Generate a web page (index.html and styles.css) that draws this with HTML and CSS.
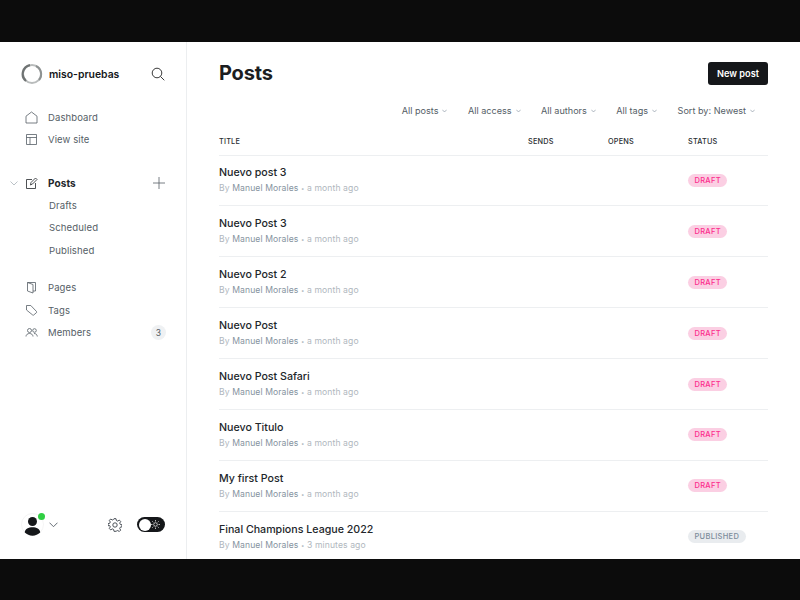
FILE: index.html
```html
<!DOCTYPE html>
<html lang="en">
<head>
<meta charset="utf-8">
<title>Posts</title>
<link rel="stylesheet" href="styles.css">
</head>
<body>
<div class="bar"></div>
<div class="app">
  <aside class="side">
    <div class="brand">
      <svg class="logo" width="22" height="22" viewBox="0 0 22 22" fill="none"><circle cx="11" cy="11" r="9" stroke="#b9bcbc" stroke-width="2"/><path d="M5 18A9 9 0 0 1 9 2.200" stroke="#6f7373" stroke-width="2.200"/><path d="M15 3A9 9 0 0 1 18 17" stroke="#8e9292" stroke-width="2"/></svg>
      <span class="site">miso-pruebas</span>
      <svg class="search" width="14" height="14" viewBox="0 0 14 14" fill="none" stroke="#222" stroke-width=".9"><circle cx="6" cy="6" r="4.800"/><path d="M9.500 9.500 13.300 13.300"/></svg>
    </div>
    <nav class="group top">
      <a class="item"><svg class="ico" width="13" height="13" viewBox="0 0 13 13"><path d="M1 5.200 6.500 1 12 5.200V12H1Z"/></svg>Dashboard</a>
      <a class="item"><svg class="ico" width="13" height="13" viewBox="0 0 13 13"><path d="M1.500 1.500h10v10h-10ZM1.500 4.500h10M5 4.500v7"/></svg>View site</a>
    </nav>
    <nav class="group posts">
      <a class="item strong">
        <svg class="caret" width="8" height="5" viewBox="0 0 8 5"><path d="M.5.5 4 4 7.500.5"/></svg>
        <svg class="ico" width="13" height="13" viewBox="0 0 13 13"><path d="M7 2.500H1.500V11.500H10.500V6M5.500 8 6 5.500 10.500 1 12 2.500 7.500 7Z"/></svg>Posts
        <svg class="plus" width="12" height="12" viewBox="0 0 12 12"><path d="M6 0v12M0 6h12"/></svg>
      </a>
      <a class="sub">Drafts</a>
      <a class="sub">Scheduled</a>
      <a class="sub">Published</a>
    </nav>
    <nav class="group lower">
      <a class="item"><svg class="ico" width="13" height="13" viewBox="0 0 13 13"><path d="M2.500 1.500h8V10H8M2.500 1.500V10L8 12V3.500L2.500 1.500"/></svg>Pages</a>
      <a class="item"><svg class="ico" width="13" height="13" viewBox="0 0 13 13"><path d="M1.500 1.500h4.300L11.500 7.500c.3.400.3.800 0 1.100L8.700 11c-.3.300-.7.300-1 0L1.500 6Z"/></svg>Tags</a>
      <a class="item"><svg class="ico" width="13" height="13" viewBox="0 0 13 13"><circle cx="4.500" cy="4.500" r="2"/><circle cx="9.500" cy="4.500" r="1.800"/><path d="M1 10.500c0-4 7-4 7 0M9 7.500c2 0 3 1 3.300 3"/></svg>Members<span class="count">3</span></a>
    </nav>
    <div class="foot">
      <div class="avatar">
        <svg width="23" height="23" viewBox="0 0 23 23"><circle cx="11.500" cy="11.500" r="11" fill="#fff" stroke="#ececec" stroke-width=".6"/><circle cx="11.500" cy="8.500" r="4.500" fill="#15171a"/><path d="M3.800 19.500c0-7 15.400-7 15.400 0a11 11 0 0 1-15.400 0Z" fill="#15171a"/></svg>
        <span class="dot"></span>
      </div>
      <svg class="chev" width="9" height="6" viewBox="0 0 9 6"><path d="M.5.700 4.500 4.700 8.500.700"/></svg>
      <svg class="gear" width="14" height="14" viewBox="0 0 14 14"><circle cx="7" cy="7" r="2.200"/><path d="M6 .7h2l.4 1.800 1.300.6 1.600-1 1.400 1.400-1 1.600.6 1.300 1.700.4v2l-1.700.4-.6 1.300 1 1.600-1.400 1.400-1.600-1-1.300.6L8 13.300H6l-.4-1.800-1.300-.6-1.600 1-1.400-1.400 1-1.600-.6-1.300L0 7.700v-2l1.700-.4.600-1.300-1-1.600 1.400-1.400 1.600 1 1.300-.6Z"/></svg>
      <div class="toggle">
        <span class="knob"></span>
        <svg width="9" height="9" viewBox="0 0 9 9"><circle cx="4.500" cy="4.500" r="1.800"/><path d="M4.500 0v1.500M4.500 7.500V9M0 4.500h1.500M7.500 4.500H9M1.300 1.300l1 1M6.700 6.700l1 1M1.300 7.700l1-1M6.700 2.300l1-1"/></svg>
      </div>
    </div>
  </aside>
  <main class="main">
    <header class="head">
      <h1>Posts</h1>
      <button class="new">New post</button>
    </header>
    <div class="filters">
      <span class="filter">All posts<svg width="5" height="4" viewBox="0 0 5 4"><path d="M.3.700 2.500 3 4.700.700"/></svg></span>
      <span class="filter">All access<svg width="5" height="4" viewBox="0 0 5 4"><path d="M.3.700 2.500 3 4.700.700"/></svg></span>
      <span class="filter">All authors<svg width="5" height="4" viewBox="0 0 5 4"><path d="M.3.700 2.500 3 4.700.700"/></svg></span>
      <span class="filter">All tags<svg width="5" height="4" viewBox="0 0 5 4"><path d="M.3.700 2.500 3 4.700.700"/></svg></span>
      <span class="filter">Sort by: Newest<svg width="5" height="4" viewBox="0 0 5 4"><path d="M.3.700 2.500 3 4.700.700"/></svg></span>
    </div>
    <div class="row-head">
      <span>TITLE</span><span>SENDS</span><span>OPENS</span><span>STATUS</span>
    </div>
    <div class="post"><div class="info"><div class="title">Nuevo post 3</div><div class="meta">By <b>Manuel Morales</b> <i>•</i> a month ago</div></div><span class="pill draft">DRAFT</span></div>
    <div class="post"><div class="info"><div class="title">Nuevo Post 3</div><div class="meta">By <b>Manuel Morales</b> <i>•</i> a month ago</div></div><span class="pill draft">DRAFT</span></div>
    <div class="post"><div class="info"><div class="title">Nuevo Post 2</div><div class="meta">By <b>Manuel Morales</b> <i>•</i> a month ago</div></div><span class="pill draft">DRAFT</span></div>
    <div class="post"><div class="info"><div class="title">Nuevo Post</div><div class="meta">By <b>Manuel Morales</b> <i>•</i> a month ago</div></div><span class="pill draft">DRAFT</span></div>
    <div class="post"><div class="info"><div class="title">Nuevo Post Safari</div><div class="meta">By <b>Manuel Morales</b> <i>•</i> a month ago</div></div><span class="pill draft">DRAFT</span></div>
    <div class="post"><div class="info"><div class="title">Nuevo Titulo</div><div class="meta">By <b>Manuel Morales</b> <i>•</i> a month ago</div></div><span class="pill draft">DRAFT</span></div>
    <div class="post"><div class="info"><div class="title">My first Post</div><div class="meta">By <b>Manuel Morales</b> <i>•</i> a month ago</div></div><span class="pill draft">DRAFT</span></div>
    <div class="post"><div class="info"><div class="title">Final Champions League 2022</div><div class="meta">By <b>Manuel Morales</b> <i>•</i> 3 minutes ago</div></div><span class="pill pub">PUBLISHED</span></div>
  </main>
</div>
<div class="bar low"></div>
</body>
</html>
```
FILE: styles.css
```css
* { box-sizing: border-box; }
html, body { margin: 0; height: 100%; overflow: hidden; }
body { font-family: Inter, "Liberation Sans", sans-serif; background: #0c0c0c; color: #15171a; display: flex; flex-direction: column; height: 600px; }
.bar { height: 42px; flex: none; background: #0c0c0c; }
.bar.low { height: 41px; }
.app { height: 517px; flex: none; display: flex; background: #fff; overflow: hidden; }

.side { width: 187px; flex: none; border-right: 1px solid #eceef0; padding: 21px 0 0 21px; display: flex; flex-direction: column; position: relative; }
.brand { display: flex; align-items: center; height: 22px; padding-right: 21px; }
.logo { flex: none; }
.site { font-size: 10.400px; font-weight: 600; margin-left: 6px; color: #15171a; }
.search { margin-left: auto; }
.group { display: flex; flex-direction: column; padding-right: 20px; }
.top { margin-top: 21px; }
.posts { margin-top: 21px; }
.lower { margin-top: 14.500px; }
.item { display: flex; align-items: center; height: 22.500px; font-size: 9.500px; color: #555e66; letter-spacing: .1px; position: relative; }
.ico { flex: none; margin: 0 10px 0 4px; fill: none; stroke: #555e66; stroke-width: .8; }
.strong { font-weight: 700; font-size: 10px; color: #22262a; }
.strong .ico { stroke: #22262a; }
.caret { position: absolute; left: -11px; top: 9px; fill: none; stroke: #aab2b9; stroke-width: .8; }
.plus { margin-left: auto; margin-right: 1px; fill: none; stroke: #555e66; stroke-width: .8; }
.sub { display: block; height: 22.500px; line-height: 22px; padding-left: 28px; font-size: 9.600px; color: #555e66; letter-spacing: .1px; }
.count { margin-left: auto; width: 15px; height: 15px; border-radius: 50%; background: #eff1f3; font-size: 8.500px; display: flex; align-items: center; justify-content: center; color: #555e66; }

.foot { position: absolute; left: 21px; right: 21px; top: 471px; height: 23px; display: flex; align-items: center; }
.avatar { position: relative; width: 23px; height: 23px; flex: none; }
.avatar svg { display: block; }
.dot { position: absolute; right: -1px; top: 0; width: 7px; height: 7px; border-radius: 50%; background: #30cf43; }
.chev { margin-left: 5px; fill: none; stroke: #555e66; stroke-width: .9; }
.gear { margin-left: auto; fill: none; stroke: #394047; stroke-width: .9; }
.toggle { margin-left: 15px; width: 28px; height: 15px; border-radius: 8px; background: #15171a; display: flex; align-items: center; justify-content: space-between; padding: 0 5px 0 1.500px; }
.knob { width: 12px; height: 12px; border-radius: 50%; background: #fff; }
.toggle svg { fill: none; stroke: #fff; stroke-width: .7; }

.main { flex: 1; padding: 20px 32px 0; min-width: 0; }
.head { display: flex; align-items: center; justify-content: space-between; height: 23px; }
h1 { margin: 0 0 1px; font-size: 20px; font-weight: 700; letter-spacing: -.2px; color: #1c1e21; }
.new { width: 60px; height: 23px; border: 0; border-radius: 3px; background: #15171a; color: #fff; font: 600 9.200px Inter, "Liberation Sans", sans-serif; padding: 0; }
.filters { display: flex; justify-content: flex-end; gap: 20.500px; margin-top: 18px; padding-right: 13px; height: 15px; align-items: center; font-size: 9.100px; color: #555e66; }
.filter { display: flex; align-items: center; gap: 4px; }
.filter svg { fill: none; stroke: #7c8b9a; stroke-width: .6; }
.row-head { display: grid; grid-template-columns: 309px 80px 80px 1fr; margin-top: 12px; height: 24.500px; align-items: center; padding-bottom: 1px; font-size: 7.300px; font-weight: 500; letter-spacing: .2px; color: #2a2e32; }
.post { display: grid; grid-template-columns: 469px 1fr; height: 50.900px; border-top: 1px solid #edeff1; align-items: center; justify-items: start; }
.title { font-size: 10.650px; font-weight: 500; color: #22262a; line-height: 14px; }
.meta { margin-top: 3px; font-size: 8.600px; color: #b0b7be; line-height: 11px; letter-spacing: .1px; }
.meta b { font-weight: 400; color: #8693a0; }
.meta i { font-style: normal; font-size: 6px; }
.pill { height: 13px; border-radius: 7px; font-size: 7.500px; font-weight: 500; letter-spacing: .3px; line-height: 13px; padding: 0 6.500px; margin-top: 0; }
.draft { background: #fbcfe3; color: #fb2d8d; }
.pub { background: #e9ecef; color: #7c8b9a; }
```
